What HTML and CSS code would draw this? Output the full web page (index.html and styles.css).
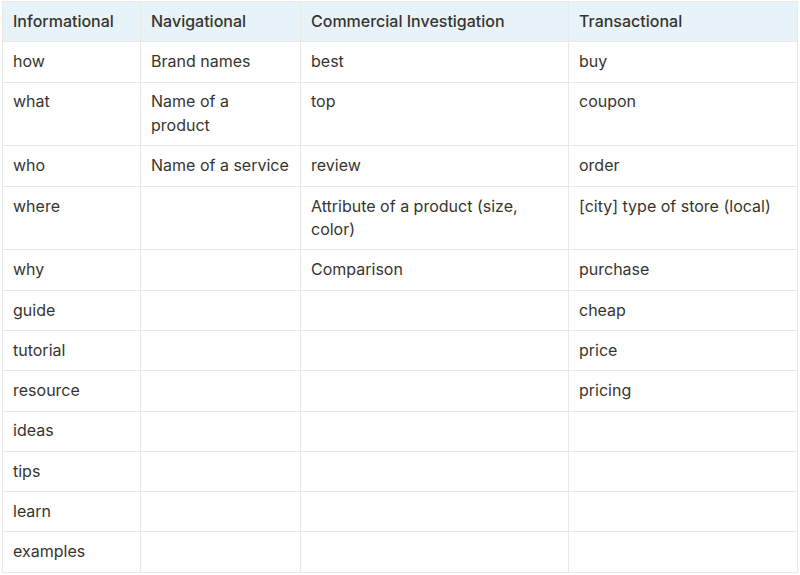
FILE: index.html
```html
<!DOCTYPE html>
<html>
<head>
<meta charset="utf-8">
<link rel="stylesheet" href="styles.css">
</head>
<body>
<table class="grid">
  <colgroup>
    <col class="c1"><col class="c2"><col class="c3"><col class="c4">
  </colgroup>
  <thead>
    <tr><th>Informational</th><th>Navigational</th><th>Commercial Investigation</th><th>Transactional</th></tr>
  </thead>
  <tbody>
    <tr><td>how</td><td>Brand names</td><td>best</td><td>buy</td></tr>
    <tr><td>what</td><td>Name of a product</td><td>top</td><td>coupon</td></tr>
    <tr><td>who</td><td>Name of a service</td><td>review</td><td>order</td></tr>
    <tr><td>where</td><td></td><td>Attribute of a product (size, color)</td><td>[city] type of store (local)</td></tr>
    <tr><td>why</td><td></td><td>Comparison</td><td>purchase</td></tr>
    <tr><td>guide</td><td></td><td></td><td>cheap</td></tr>
    <tr><td>tutorial</td><td></td><td></td><td>price</td></tr>
    <tr><td>resource</td><td></td><td></td><td>pricing</td></tr>
    <tr><td>ideas</td><td></td><td></td><td></td></tr>
    <tr><td>tips</td><td></td><td></td><td></td></tr>
    <tr><td>learn</td><td></td><td></td><td></td></tr>
    <tr><td>examples</td><td></td><td></td><td></td></tr>
  </tbody>
</table>
</body>
</html>
```
FILE: styles.css
```css
html, body {
  margin: 0;
  padding: 0;
  background: #ffffff;
}
body {
  padding: 1px 0 0 2px;
  font-family: Inter, "Liberation Sans", sans-serif;
  color: #37352f;
}
.grid {
  border-collapse: collapse;
  table-layout: fixed;
  width: 795px;
  font-size: 16px;
  line-height: 23.5px;
}
.c1 { width: 138px; }
.c2 { width: 160px; }
.c3 { width: 268px; }
.c4 { width: 229px; }
.grid th, .grid td {
  border: 1px solid #e9e9e7;
  padding: 7.9px 10px;
  text-align: left;
  vertical-align: top;
  font-weight: 400;
}
.grid th {
  background: #e7f3f8;
  font-weight: 500;
}
```
